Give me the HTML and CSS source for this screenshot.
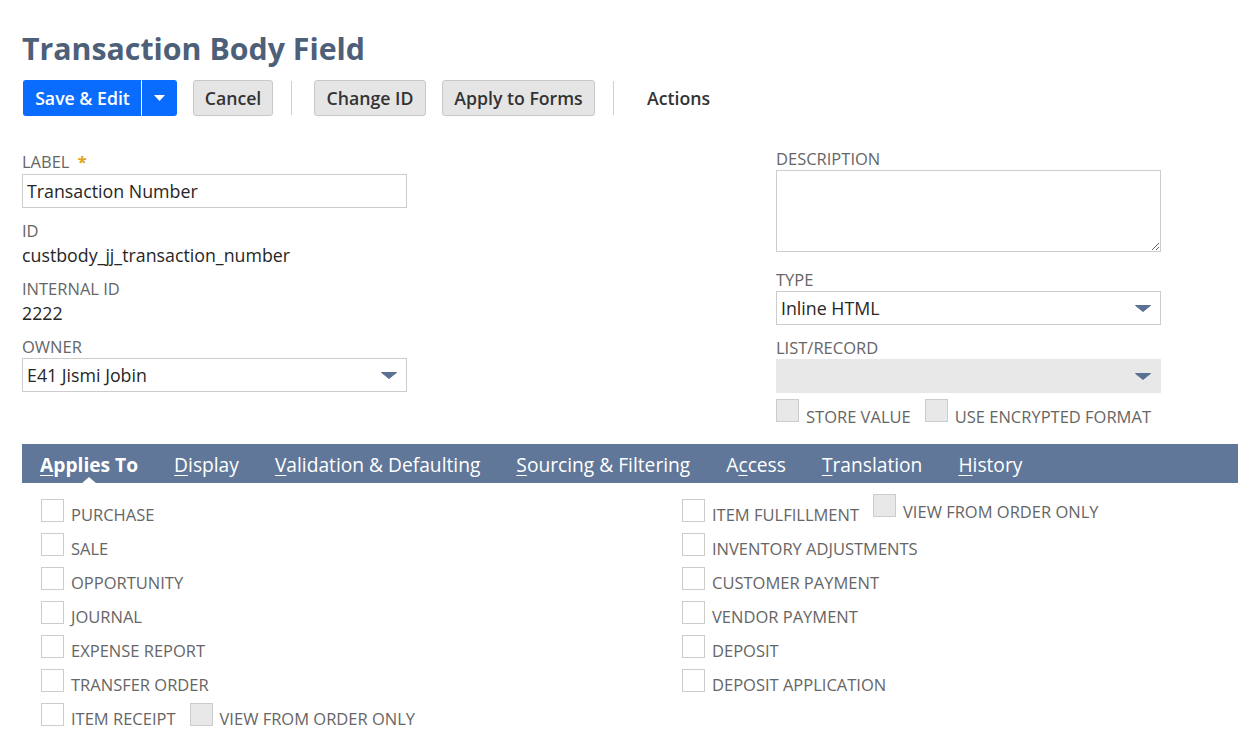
FILE: index.html
```html
<!DOCTYPE html>
<html>
<head>
<meta charset="utf-8">
<title>Transaction Body Field</title>
<link rel="stylesheet" href="styles.css">
</head>
<body>
<div class="page">
  <h1 class="title">Transaction Body Field</h1>
  <div class="toolbar">
    <div class="split">
      <button class="btn primary main">Save &amp; Edit</button>
      <button class="btn primary caret"><svg width="11" height="6" viewBox="0 0 11 6"><polygon points="0,0 11,0 5.5,6" fill="#fff"/></svg></button>
    </div>
    <button class="btn cancel">Cancel</button>
    <span class="sep"></span>
    <button class="btn changeid">Change ID</button>
    <button class="btn apply">Apply to Forms</button>
    <span class="sep"></span>
    <span class="actions">Actions</span>
  </div>

  <div class="form">
    <div class="col left">
      <div class="lbl">Label <span class="req">*</span></div>
      <div class="inp first">Transaction Number</div>
      <div class="lbl gap">ID</div>
      <div class="val">custbody_jj_transaction_number</div>
      <div class="lbl gap">Internal ID</div>
      <div class="val">2222</div>
      <div class="lbl gap">Owner</div>
      <div class="inp sel">E41 Jismi Jobin<svg class="arrow" width="16" height="7" viewBox="0 0 16 7"><polygon points="0.5,0.5 15.5,0.5 8,6.5" fill="#5b7193" stroke="#5b7193" stroke-linejoin="round"/></svg></div>
    </div>
    <div class="col right">
      <div class="lbl">Description</div>
      <textarea class="desc"></textarea>
      <div class="lbl gap-type">Type</div>
      <div class="inp sel">Inline HTML<svg class="arrow" width="16" height="7" viewBox="0 0 16 7"><polygon points="0.5,0.5 15.5,0.5 8,6.5" fill="#5b7193" stroke="#5b7193" stroke-linejoin="round"/></svg></div>
      <div class="lbl gap">List/Record</div>
      <div class="inp sel disabled"><svg class="arrow" width="16" height="7" viewBox="0 0 16 7"><polygon points="0.5,0.5 15.5,0.5 8,6.5" fill="#5b7193" stroke="#5b7193" stroke-linejoin="round"/></svg></div>
      <div class="opts">
        <span class="cb dis"></span><span class="txt">STORE VALUE</span>
        <span class="cb dis next"></span><span class="txt">USE ENCRYPTED FORMAT</span>
      </div>
    </div>
  </div>

  <div class="tabs">
    <span class="tab active"><u>A</u>pplies To</span>
    <span class="tab"><u>D</u>isplay</span>
    <span class="tab"><u>V</u>alidation &amp; Defaulting</span>
    <span class="tab"><u>S</u>ourcing &amp; Filtering</span>
    <span class="tab">A<u>c</u>cess</span>
    <span class="tab"><u>T</u>ranslation</span>
    <span class="tab"><u>H</u>istory</span>
  </div>

  <div class="applies">
    <div class="cbcol first">
      <div class="row"><span class="cb"></span><span class="txt">PURCHASE</span></div>
      <div class="row"><span class="cb"></span><span class="txt">SALE</span></div>
      <div class="row"><span class="cb"></span><span class="txt">OPPORTUNITY</span></div>
      <div class="row"><span class="cb"></span><span class="txt">JOURNAL</span></div>
      <div class="row"><span class="cb"></span><span class="txt">EXPENSE REPORT</span></div>
      <div class="row"><span class="cb"></span><span class="txt">TRANSFER ORDER</span></div>
      <div class="row"><span class="cb"></span><span class="txt">ITEM RECEIPT</span><span class="cb dis next"></span><span class="txt">VIEW FROM ORDER ONLY</span></div>
    </div>
    <div class="cbcol">
      <div class="row"><span class="cb"></span><span class="txt">ITEM FULFILLMENT</span><span class="cb dis next up"></span><span class="txt up">VIEW FROM ORDER ONLY</span></div>
      <div class="row"><span class="cb"></span><span class="txt">INVENTORY ADJUSTMENTS</span></div>
      <div class="row"><span class="cb"></span><span class="txt">CUSTOMER PAYMENT</span></div>
      <div class="row"><span class="cb"></span><span class="txt">VENDOR PAYMENT</span></div>
      <div class="row"><span class="cb"></span><span class="txt">DEPOSIT</span></div>
      <div class="row"><span class="cb"></span><span class="txt">DEPOSIT APPLICATION</span></div>
    </div>
  </div>
</div>
</body>
</html>
```

FILE: styles.css
```css
html, body {
  margin: 0;
  padding: 0;
  background: #fff;
  font-family: "Open Sans", "Liberation Sans", sans-serif;
}

.page {
  padding-left: 22px;
}

.title {
  margin: 0;
  padding-top: 31px;
  font-size: 30.3px;
  line-height: 36px;
  font-weight: 700;
  color: #4d5f79;
}

/* toolbar */
.toolbar {
  display: flex;
  align-items: center;
  height: 36px;
  margin-top: 13px;
}

.btn {
  height: 36px;
  box-sizing: border-box;
  margin: 0;
  padding: 0 12px;
  border: 1px solid #c8c8c8;
  border-radius: 3px;
  background: #e5e5e5;
  color: #333;
  font-family: "Open Sans", sans-serif;
  font-size: 17.7px;
  font-weight: 600;
  line-height: 34px;
  cursor: pointer;
}

.split {
  display: flex;
  margin-left: 1px;
}

.btn.primary {
  background: #0a6cff;
  border-color: #0a6cff;
  color: #fff;
}

.btn.main {
  width: 119px;
  padding: 0;
  border-radius: 3px 0 0 3px;
  border-right: 1px solid #fff;
}

.btn.caret {
  width: 35px;
  padding: 0;
  border-left: none;
  border-radius: 0 3px 3px 0;
  display: flex;
  align-items: center;
  justify-content: center;
}

.btn.cancel {
  width: 80px;
  padding: 0;
  margin-left: 16px;
}

.btn.changeid {
  width: 112px;
  padding: 0;
}

.btn.apply {
  width: 153px;
  padding: 0;
  margin-left: 16px;
}

.sep {
  width: 1px;
  height: 34px;
  background: #cfcfcf;
  margin: 0 22px 0 18px;
}

.actions {
  margin-left: 11px;
  font-size: 17.7px;
  font-weight: 600;
  color: #333;
}

/* form */
.form {
  display: flex;
  align-items: flex-start;
  column-gap: 369px;
  margin-top: 33px;
}

.col {
  width: 385px;
  display: flex;
  flex-direction: column;
}

.col.left {
  padding-top: 3px;
}

.lbl {
  font-size: 16.5px;
  line-height: 20px;
  color: #666;
  text-transform: uppercase;
}

.lbl.gap {
  margin-top: 13px;
}

.lbl.gap-type {
  margin-top: 18px;
}

.req {
  color: #e0a21b;
  font-weight: 700;
  margin-left: 4px;
}

.val {
  margin-top: 3px;
  font-size: 17.8px;
  line-height: 22px;
  color: #262626;
}

.inp {
  height: 34px;
  box-sizing: border-box;
  border: 1px solid #cccccc;
  padding: 0 4px;
  margin-top: 1px;
  display: flex;
  align-items: center;
  justify-content: space-between;
  font-size: 17.8px;
  color: #262626;
  background: #fff;
}

.inp.first {
  margin-top: 2px;
}

.inp.disabled {
  background: #e8e8e8;
  border-color: #e8e8e8;
  justify-content: flex-end;
}

.arrow {
  margin-right: 5px;
  flex: none;
}

.desc {
  display: block;
  margin: 1px 0 0 0;
  width: 385px;
  height: 82px;
  box-sizing: border-box;
  border: 1px solid #cccccc;
  border-radius: 0;
  padding: 4px;
  font-family: "Open Sans", sans-serif;
  font-size: 17.8px;
  resize: both;
  outline: none;
}

.opts {
  display: flex;
  align-items: flex-start;
  margin-top: 6px;
  height: 24px;
}

/* checkboxes */
.cb {
  flex: none;
  display: block;
  width: 23px;
  height: 23px;
  box-sizing: border-box;
  border: 1px solid #cccccc;
  background: #fff;
}

.cb.dis {
  background: #e8e8e8;
}

.cb.next {
  margin-left: 14px;
}

.txt {
  margin-left: 7px;
  margin-top: 8px;
  font-size: 16.5px;
  line-height: 20px;
  color: #666;
  white-space: nowrap;
}

/* tabs */
.tabs {
  display: flex;
  align-items: center;
  column-gap: 36px;
  height: 39px;
  box-sizing: border-box;
  padding-top: 2px;
  margin-top: 21px;
  padding-left: 18px;
  background: #607799;
}

.tab {
  position: relative;
  font-size: 19.2px;
  line-height: 24px;
  color: #fff;
  white-space: nowrap;
}

.tab u {
  text-decoration-thickness: 1px;
  text-underline-offset: 3px;
}

.tab.active {
  font-weight: 700;
}

.tab.active::after {
  content: "";
  position: absolute;
  left: 50%;
  bottom: -7px;
  margin-left: -8px;
  border-left: 8px solid transparent;
  border-right: 8px solid transparent;
  border-bottom: 7px solid #fff;
}

.applies {
  display: flex;
  padding: 16px 0 0 19px;
}

.cbcol {
  display: flex;
  flex-direction: column;
}

.cbcol.first {
  width: 641px;
}

.row {
  display: flex;
  align-items: flex-start;
  height: 34px;
}

.row .txt {
  margin-top: 6px;
}

.row .cb.up {
  margin-top: -5px;
}

.row .txt.up {
  margin-top: 3px;
}
```
